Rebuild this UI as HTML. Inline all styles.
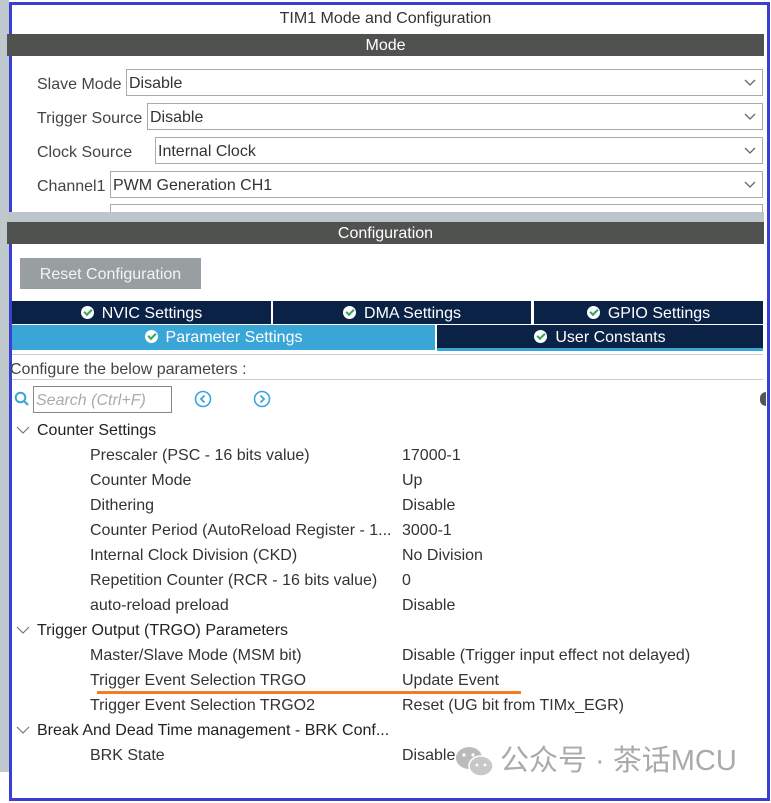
<!DOCTYPE html>
<html><head><style>
*{margin:0;padding:0;box-sizing:border-box}
body{width:771px;height:803px;background:#fff;position:relative;overflow:hidden;font-family:"Liberation Sans",sans-serif;font-size:16px;color:#333}
.a{position:absolute}
.hdr{position:absolute;left:7px;width:757px;height:22px;background:#505250;color:#fff;text-align:center;line-height:23px;font-size:16px}
.lbl{position:absolute;left:37px;color:#444;font-size:16px}
.dd{position:absolute;right:8px;height:27px;border:1px solid #aaa;background:#fff;padding-left:2px;line-height:27px;color:#333}
.dd svg{position:absolute;right:6px;top:9px}
.tab{position:absolute;height:23px;background:#0b2247;color:#fff;text-align:center;line-height:25px;font-size:16px}
.ck{display:inline-block;width:13px;height:13px;border-radius:50%;background:#fff;vertical-align:-1px;margin-right:8px;position:relative}
.ck:after{content:"";position:absolute;left:3px;top:3px;width:6px;height:3px;border-left:2px solid #3aa35c;border-bottom:2px solid #3aa35c;transform:rotate(-45deg)}
.r{position:absolute;font-size:16px;color:#333;white-space:nowrap}
.h{left:37px;color:#222}
.c{left:90px}
.v{left:402px}
.chev{position:absolute;left:16px}
</style></head><body>
<div class="a" style="left:0;top:0;width:9px;height:772px;background:#bfc8cc"></div>
<div class="a" style="left:9px;top:2px;width:761px;height:799px;border:3px solid #3b3fcf"></div>
<div class="a" style="left:0;top:8px;width:771px;text-align:center;color:#333;font-size:16px;line-height:22px">TIM1 Mode and Configuration</div>
<div class="hdr" style="top:34px">Mode</div>
<div class="lbl" style="top:76px">Slave Mode</div>
<div class="dd" style="left:126px;top:69px;width:637px">Disable<svg width="12" height="8"><path d="M1 1L6 6L11 1" stroke="#666" fill="none" stroke-width="1.3"/></svg></div>
<div class="lbl" style="top:110px">Trigger Source</div>
<div class="dd" style="left:147px;top:103px;width:616px">Disable<svg width="12" height="8"><path d="M1 1L6 6L11 1" stroke="#666" fill="none" stroke-width="1.3"/></svg></div>
<div class="lbl" style="top:144px">Clock Source</div>
<div class="dd" style="left:155px;top:137px;width:608px">Internal Clock<svg width="12" height="8"><path d="M1 1L6 6L11 1" stroke="#666" fill="none" stroke-width="1.3"/></svg></div>
<div class="lbl" style="top:178px">Channel1</div>
<div class="dd" style="left:110px;top:171px;width:653px">PWM Generation CH1<svg width="12" height="8"><path d="M1 1L6 6L11 1" stroke="#666" fill="none" stroke-width="1.3"/></svg></div>
<div class="a" style="left:110px;top:204px;width:653px;height:10px;border:1px solid #aaa;border-bottom:none"></div>
<div class="a" style="left:7px;top:212px;width:757px;height:10px;background:#bcc5ca"></div>
<div class="hdr" style="top:222px">Configuration</div>
<div class="a" style="left:20px;top:258px;width:181px;height:31px;background:#999ea1;color:#f4f4f4;line-height:33px;text-align:center;font-size:16px">Reset Configuration</div>
<div class="tab" style="left:12px;top:301px;width:259px"><span class="ck"></span>NVIC Settings</div>
<div class="tab" style="left:273px;top:301px;width:258px"><span class="ck"></span>DMA Settings</div>
<div class="tab" style="left:534px;top:301px;width:229px"><span class="ck"></span>GPIO Settings</div>
<div class="tab" style="left:12px;top:325px;width:423px;background:#3aa6d8;height:25px;line-height:26px"><span class="ck"></span>Parameter Settings</div>
<div class="tab" style="left:437px;top:325px;width:326px"><span class="ck"></span>User Constants</div>
<div class="a" style="left:437px;top:348px;width:326px;height:3px;background:#3aa6d8"></div>
<div class="a" style="left:12px;top:354px;width:751px;height:1px;background:#ccc"></div>
<div class="r" style="left:10px;top:361px;color:#444">Configure the below parameters :</div>
<div class="a" style="left:12px;top:379px;width:751px;height:1px;background:#ccc"></div>
<svg class="a" style="left:14px;top:391px" width="16" height="16"><circle cx="6.5" cy="6.5" r="4.8" stroke="#3aa6d8" stroke-width="2" fill="none"/><path d="M10 10L14 14" stroke="#3aa6d8" stroke-width="2.2"/></svg>
<div class="a" style="left:33px;top:386px;width:139px;height:27px;border:1px solid #888;color:#aaa;font-style:italic;line-height:27px;padding-left:2px">Search (Ctrl+F)</div>
<svg class="a" style="left:194px;top:390px" width="18" height="18"><circle cx="9" cy="9" r="7.5" stroke="#3aa6d8" stroke-width="1.6" fill="none"/><path d="M10.5 5.5L7 9L10.5 12.5" stroke="#3aa6d8" stroke-width="1.8" fill="none"/></svg>
<svg class="a" style="left:253px;top:390px" width="18" height="18"><circle cx="9" cy="9" r="7.5" stroke="#3aa6d8" stroke-width="1.6" fill="none"/><path d="M7.5 5.5L11 9L7.5 12.5" stroke="#3aa6d8" stroke-width="1.8" fill="none"/></svg>
<div class="a" style="left:760px;top:392px;width:6px;height:14px;background:#555;border-radius:6px 0 0 6px"></div>

<svg class="chev" style="top:426px" width="14" height="9"><path d="M1 1L7 7L13 1" stroke="#777" fill="none" stroke-width="1.2"/></svg><div class="r h" style="top:422px">Counter Settings</div>
<div class="r c" style="top:447px">Prescaler (PSC - 16 bits value)</div><div class="r v" style="top:447px">17000-1</div>
<div class="r c" style="top:472px">Counter Mode</div><div class="r v" style="top:472px">Up</div>
<div class="r c" style="top:497px">Dithering</div><div class="r v" style="top:497px">Disable</div>
<div class="r c" style="top:522px">Counter Period (AutoReload Register - 1...</div><div class="r v" style="top:522px">3000-1</div>
<div class="r c" style="top:547px">Internal Clock Division (CKD)</div><div class="r v" style="top:547px">No Division</div>
<div class="r c" style="top:572px">Repetition Counter (RCR - 16 bits value)</div><div class="r v" style="top:572px">0</div>
<div class="r c" style="top:597px">auto-reload preload</div><div class="r v" style="top:597px">Disable</div>
<svg class="chev" style="top:626px" width="14" height="9"><path d="M1 1L7 7L13 1" stroke="#777" fill="none" stroke-width="1.2"/></svg><div class="r h" style="top:622px">Trigger Output (TRGO) Parameters</div>
<div class="r c" style="top:647px">Master/Slave Mode (MSM bit)</div><div class="r v" style="top:647px">Disable (Trigger input effect not delayed)</div>
<div class="r c" style="top:672px">Trigger Event Selection TRGO</div><div class="r v" style="top:672px">Update Event</div>
<div class="a" style="left:97px;top:691px;width:424px;height:3px;background:#f57a20"></div>
<div class="r c" style="top:697px">Trigger Event Selection TRGO2</div><div class="r v" style="top:697px">Reset (UG bit from TIMx_EGR)</div>
<svg class="chev" style="top:726px" width="14" height="9"><path d="M1 1L7 7L13 1" stroke="#777" fill="none" stroke-width="1.2"/></svg><div class="r h" style="top:722px">Break And Dead Time management - BRK Conf...</div>
<div class="r c" style="top:747px">BRK State</div><div class="r v" style="top:747px">Disable</div>

<svg class="a" style="left:455px;top:745px" width="40" height="34"><ellipse cx="14" cy="13" rx="13" ry="11" fill="#bbb"/><ellipse cx="26" cy="21" rx="12" ry="10" fill="#c8c8c8" stroke="#fff" stroke-width="1.5"/><circle cx="9" cy="10" r="1.6" fill="#fff"/><circle cx="18" cy="10" r="1.6" fill="#fff"/><circle cx="22" cy="20" r="1.4" fill="#fff"/><circle cx="30" cy="20" r="1.4" fill="#fff"/></svg>
<div class="r" style="left:500px;top:744px;font-size:29px;color:#aaa;font-family:'Liberation Sans','Noto Sans CJK SC',sans-serif;line-height:34px">公众号 · 茶话MCU</div>
</body></html>
